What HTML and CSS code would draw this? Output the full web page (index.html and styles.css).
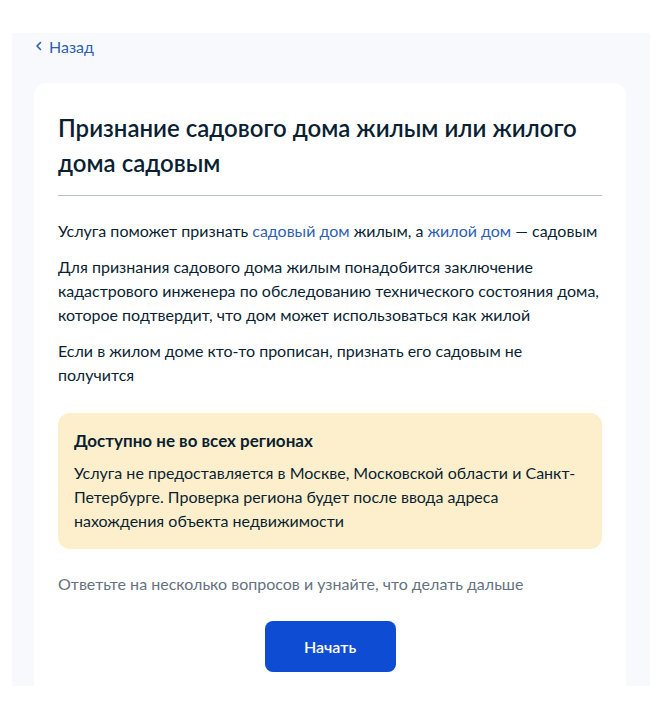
FILE: index.html
```html
<!DOCTYPE html>
<html lang="ru">
  <head>
    <meta charset="utf-8" />
    <meta name="viewport" content="width=device-width, initial-scale=1" />
    <title>Признание садового дома жилым</title>
    <link rel="stylesheet" href="styles.css">
  </head>
  <body>
    <div class="shell">
      <a class="back" href="#">
        <svg width="8" height="10" viewBox="0 0 8 10"><path d="M5.5 1.5 2 5l3.5 3.5" fill="none" stroke="currentColor" stroke-width="1.6" stroke-linecap="round" stroke-linejoin="round"/></svg>
        Назад
      </a>
      <div class="card">
        <h1 class="title">Признание садового дома жилым или жилого дома садовым</h1>
        <hr class="divider" />
        <p>Услуга поможет признать <a href="#">садовый дом</a> жилым, а <a href="#">жилой дом</a> — садовым</p>
        <p>Для признания садового дома жилым понадобится заключение кадастрового инженера по обследованию технического состояния дома, которое подтвердит, что дом может использоваться как жилой</p>
        <p>Если в жилом доме кто-то прописан, признать его садовым не получится</p>
        <div class="warning">
          <h2>Доступно не во всех регионах</h2>
          <p>Услуга не предоставляется в Москве, Московской области и Санкт-Петербурге. Проверка региона будет после ввода адреса нахождения объекта недвижимости</p>
        </div>
        <p class="hint">Ответьте на несколько вопросов и узнайте, что делать дальше</p>
        <div class="actions">
          <button class="start">Начать</button>
        </div>
      </div>
    </div>
  </body>
</html>
```

FILE: styles.css
```css
* {box-sizing: border-box}
body {
  margin: 0;
  padding: 33px 7px 0 12px;
  background: #fff;
  font-family: Lato, "Noto Sans", sans-serif;
  color: #0b1f33;
}
.shell {
  height: 653px;
  overflow: hidden;
  background: #f7f9fc;
  padding: 0 24px 0 22px;
}
.back {
  display: flex;
  align-items: center;
  gap: 6px;
  height: 26px;
  color: #2f5fb3;
  font-size: 16px;
  text-decoration: none;
}
.back svg {margin-left: 1px}
.card {
  margin-top: 24px;
  background: #fff;
  border-radius: 12px;
  padding: 27px 24px 40px;
  min-height: 700px;
}
.title {
  margin: 0;
  font-size: 24px;
  font-weight: 600;
  line-height: 35px;
  color: #0b1f33;
}
.divider {
  margin: 15px 0 23px;
  border: 0;
  border-top: 1px solid #b3bfcb;
}
.card p {
  margin: 0 0 12px;
  font-size: 16px;
  line-height: 24px;
}
.card a {
  color: #2f5fb3;
  text-decoration: none;
}
.warning {
  margin-top: 26px;
  background: #fdefcb;
  border-radius: 12px;
  padding: 16px;
}
.warning h2 {
  margin: 0 0 8px;
  font-size: 17px;
  font-weight: 700;
  line-height: 24px;
}
.warning p {margin: 0}
.card .hint {
  margin: 23px 0 0;
  color: #66727f;
}
.actions {
  display: flex;
  justify-content: center;
  margin-top: 25px;
}
.start {
  width: 131px;
  height: 51px;
  border: 0;
  border-radius: 8px;
  background: #0d4cd3;
  color: #fff;
  font-family: Lato, "Noto Sans", sans-serif;
  font-size: 16px;
  font-weight: 600;
}
```
